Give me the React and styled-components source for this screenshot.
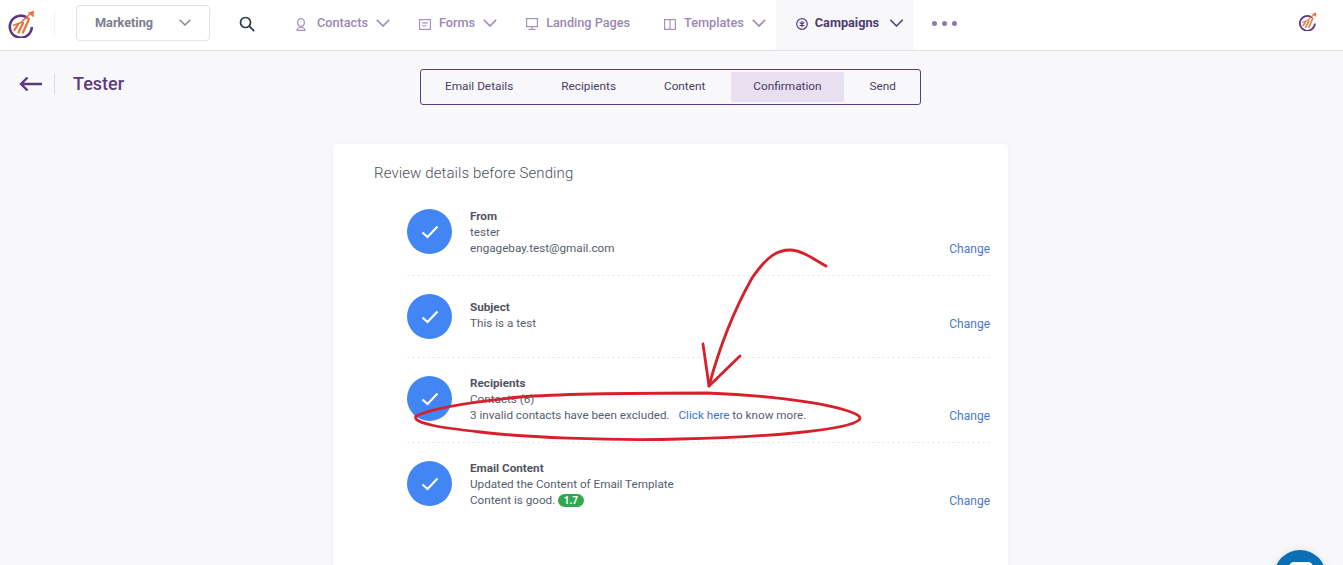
import React from "react";
import styled, { createGlobalStyle } from "styled-components";

const Global = createGlobalStyle`
  html, body { margin: 0; padding: 0; height: 565px; overflow: hidden; background: #f8f8fb; }
  body { font-family: Roboto, "Liberation Sans", sans-serif; color: #565e6e; }
  * { box-sizing: border-box; }
`;

const Page = styled.div`
  position: relative;
  width: 1343px;
  height: 565px;
  overflow: hidden;
`;
const Header = styled.header`
  display: flex;
  align-items: stretch;
  height: 51px;
  background: #fff;
  border-bottom: 1px solid #e3e3e6;
`;
const LogoCell = styled.div`
  display: flex;
  align-items: center;
  width: 55px;
  padding: 0 0 2px 7px;
  position: relative;
  &::after {
    content: "";
    position: absolute;
    right: 0;
    top: 12px;
    height: 22px;
    width: 1px;
    background: #f1f1f3;
  }
`;
const Select = styled.div`
  display: flex;
  align-items: center;
  justify-content: space-between;
  width: 134px;
  height: 36px;
  margin: 5px 0 0 21px;
  padding: 0 18px 1px 18px;
  border: 1px solid #e2e2e6;
  border-radius: 4px;
  font-size: 12.7px;
  font-weight: 700;
  color: #7d7d90;
`;
const SearchCell = styled.div`
  display: flex;
  align-items: center;
  padding: 0 0 2px 29px;
  width: 66px;
`;
const NavItem = styled.div`
  display: flex;
  align-items: center;
  gap: ${p => (p.$active ? 7 : 8)}px;
  padding: 0 ${p => (p.$plain ? 15 : 10)}px 6px ${p => (p.$active ? 20 : 19)}px;
  font-size: 12.7px;
  font-weight: ${p => (p.$active ? 700 : 500)};
  color: ${p => (p.$active ? "#4d3a70" : "#9b87b5")};
  background: ${p => (p.$active ? "#f8f8fb" : "transparent")};
  height: 50px;
  white-space: nowrap;
`;
const NavIcon = styled.span`
  display: flex;
  width: ${p => p.$w || 12}px;
  margin-top: 4px;
`;
const NavChevron = styled.span`
  display: flex;
  margin: 2px 0 0 ${p => p.$offset || 0}px;
`;
const Dots = styled.div`
  display: flex;
  align-items: center;
  gap: 5px;
  padding: 0 0 3px 18px;
`;
const Dot = styled.i`
  width: 5px;
  height: 5px;
  border-radius: 50%;
  background: #8f78ad;
`;
const RightCell = styled.div`
  margin-left: auto;
  display: flex;
  align-items: center;
  padding: 0 26px 8px 0;
`;

const Main = styled.main`
  padding-right: 2px;
`;
const SubHeader = styled.div`
  display: grid;
  grid-template-columns: 1fr auto 1fr;
  padding-top: 18px;
`;
const Crumb = styled.div`
  display: flex;
  align-items: center;
  padding-left: 19px;
  height: 30px;
`;
const Sep = styled.span`
  width: 1px;
  height: 20px;
  margin: 0 18px 0 12px;
  background: #dcdce2;
`;
const PageTitle = styled.h1`
  margin: 0 0 2px;
  font-size: 18px;
  font-weight: 500;
  color: #5c3a7e;
`;
const Tabs = styled.nav`
  display: flex;
  align-items: center;
  justify-content: space-between;
  width: 501px;
  height: 36px;
  padding: 0 2px;
  border: 1px solid #5d3a7e;
  border-radius: 3px;
`;
const Tab = styled.div`
  display: flex;
  align-items: center;
  flex: none;
  height: 30px;
  padding: 0 22px 3px;
  font-size: 11.8px;
  white-space: nowrap;
  color: #4a3a68;
  border-radius: 2px;
  background: ${p => (p.$active ? "#e8dff0" : "transparent")};
`;
const Card = styled.section`
  width: 675px;
  height: 440px;
  margin: 39px auto 0;
  padding: 20px 18px 0 41px;
  background: #fff;
  border-radius: 4px;
  box-shadow: 0 0 6px rgba(60, 60, 90, 0.05);
`;
const CardTitle = styled.h2`
  margin: 0 0 9px;
  font-size: 15px;
  line-height: 18px;
  font-weight: 300;
  color: #4a4f5c;
  letter-spacing: 0.1px;
`;
const List = styled.div`
  margin-left: 33px;
`;
const Row = styled.div`
  display: flex;
  align-items: flex-start;
  gap: 18px;
  padding: 18px 0;
  border-bottom: ${p => (p.$last ? "none" : "1px dashed #ececef")};
`;
const Circle = styled.div`
  flex: none;
  display: flex;
  align-items: center;
  justify-content: center;
  width: 45px;
  height: 45px;
  border-radius: 50%;
  background: #4285f4;
`;
const Body = styled.div`
  flex: 1;
  display: flex;
  align-items: flex-end;
  justify-content: space-between;
  margin: ${p => p.$inset}px 0 1px;
`;
const Lines = styled.div`
  font-size: 11.7px;
  line-height: 16px;
  color: #565e6e;
`;
const Label = styled.div`
  font-weight: 700;
  color: #50535f;
`;
const Link = styled.a`
  color: #3f6fd0;
  margin-left: ${p => (p.$gap ? 6 : 0)}px;
`;
const Change = styled.a`
  font-size: 12px;
  line-height: 16px;
  color: #4a78c9;
  margin-bottom: -1px;
`;
const Score = styled.span`
  display: inline-block;
  padding: 0 5.5px;
  height: 13px;
  line-height: 13px;
  border-radius: 7px;
  background: #2fa84f;
  color: #fff;
  font-size: 10px;
  font-weight: 700;
`;
const Chat = styled.div`
  position: absolute;
  left: 1274px;
  top: 550px;
  width: 52px;
  height: 52px;
  border-radius: 50%;
  background: #0a6fb5;
  box-shadow: 0 0 8px rgba(0, 0, 0, 0.1);
  &::after {
    content: "";
    position: absolute;
    left: 15px;
    top: 12px;
    width: 24px;
    height: 20px;
    border-radius: 5px;
    background: #fff;
  }
`;
const Ink = styled.svg`
  position: absolute;
  inset: 0;
  pointer-events: none;
`;

const Chevron = ({ c = "#9b87b5", w = 14, h = 8, sw = 1.6 }) => (
  <svg width={w} height={h} viewBox="0 0 14 8" fill="none">
    <path d="M.8.8 7 7l6.2-6.2" stroke={c} strokeWidth={sw} />
  </svg>
);
const Logo = ({ s = 28 }) => (
  <svg width={s} height={s} viewBox="0 0 28 28" fill="none">
    <path d="M20.8 8.2A11 11 0 1 0 24.8 17" stroke="#5a3a86" strokeWidth="2.6" />
    <g stroke="#e8743b" strokeWidth="2.2" strokeLinecap="round">
      <path d="M7.5 20 11 14.5" />
      <path d="M11.5 22.5 16 13" />
      <path d="M16 22.5 22 9" />
    </g>
    <path d="M6 15.5 14 12.5 23.5 3.5" stroke="#e8743b" strokeWidth="1.7" />
    <path d="M27 0.8 26.6 7.4 20.8 2.4Z" fill="#e8743b" />
  </svg>
);
const Stroke = ({ children, c = "#a592bd", w = 14, h = 14 }) => (
  <svg width={w} height={h} viewBox={`0 0 ${w} ${h}`} fill="none" stroke={c} strokeWidth="1.2">
    {children}
  </svg>
);
const Check = () => (
  <svg width="18" height="14" viewBox="0 0 18 14" fill="none">
    <path d="M1.5 7.5 6.5 12 16.5 1.5" stroke="#fff" strokeWidth="2.2" />
  </svg>
);

const rows = [
  { label: "From", inset: -1, lines: ["tester", "engagebay.test@gmail.com"] },
  { label: "Subject", inset: 5, lines: ["This is a test"] },
  {
    label: "Recipients",
    inset: -1,
    lines: [
      "Contacts (6)",
      <>3 invalid contacts have been excluded. <Link $gap>Click here</Link> to know more.</>,
    ],
  },
  {
    label: "Email Content",
    inset: -1,
    last: true,
    lines: ["Updated the Content of Email Template", <>Content is good. <Score>1.7</Score></>],
  },
];

export default function App() {
  return (
    <Page>
      <Global />
      <Header>
        <LogoCell><Logo /></LogoCell>
        <Select>
          Marketing
          <Chevron c="#85858f" w={12} h={7} />
        </Select>
        <SearchCell>
          <svg width="16" height="16" viewBox="0 0 16 16" fill="none" stroke="#2d3a4a" strokeWidth="1.7">
            <circle cx="6.5" cy="6.5" r="5" />
            <path d="m10.2 10.2 5 5" />
          </svg>
        </SearchCell>
        <NavItem>
          <NavIcon $w={14}>
            <Stroke w={12} h={13}>
              <ellipse cx="6" cy="4.5" rx="3.4" ry="3.9" />
              <path d="M2 12.4c0-2.2 1.5-2.9 4-2.9s4 .7 4 2.9z" />
            </Stroke>
          </NavIcon>
          Contacts
          <NavChevron><Chevron /></NavChevron>
        </NavItem>
        <NavItem>
          <NavIcon>
            <Stroke w={12} h={11}>
              <rect x=".6" y=".6" width="10.8" height="9.8" />
              <path d="M3.2 3.8h5.6M3.2 6.8h4" />
            </Stroke>
          </NavIcon>
          Forms
          <NavChevron><Chevron /></NavChevron>
        </NavItem>
        <NavItem $plain>
          <NavIcon>
            <Stroke w={12} h={12}>
              <rect x=".6" y=".6" width="10.8" height="8" />
              <path d="M6 8.6v2.4M2.5 11.4h7" />
            </Stroke>
          </NavIcon>
          Landing Pages
        </NavItem>
        <NavItem>
          <NavIcon>
            <Stroke w={12} h={11}>
              <rect x=".6" y=".6" width="10.8" height="9.8" />
              <path d="M6 .6v9.8" />
            </Stroke>
          </NavIcon>
          Templates
          <NavChevron><Chevron /></NavChevron>
        </NavItem>
        <NavItem $active>
          <NavIcon>
            <Stroke c="#5a3a86" w={12} h={12}>
              <circle cx="6" cy="6" r="5.3" />
              <path d="M6 3v6M3.6 4.5l4.8 3M8.4 4.5l-4.8 3" />
            </Stroke>
          </NavIcon>
          Campaigns
          <NavChevron $offset={3}><Chevron c="#5a3a86" w={15} /></NavChevron>
        </NavItem>
        <Dots><Dot /><Dot /><Dot /></Dots>
        <RightCell><Logo s={19} /></RightCell>
      </Header>
      <Main>
        <SubHeader>
          <Crumb>
            <svg width="23" height="16" viewBox="0 0 23 16" fill="none" stroke="#5c3a7e" strokeWidth="2.4">
              <path d="M23 8H2M8.5 1.5 2 8l6.5 6.5" />
            </svg>
            <Sep />
            <PageTitle>Tester</PageTitle>
          </Crumb>
          <Tabs>
            <Tab>Email Details</Tab>
            <Tab>Recipients</Tab>
            <Tab>Content</Tab>
            <Tab $active>Confirmation</Tab>
            <Tab>Send</Tab>
          </Tabs>
        </SubHeader>
        <Card>
          <CardTitle>Review details before Sending</CardTitle>
          <List>
            {rows.map(r => (
              <Row key={r.label} $last={r.last}>
                <Circle><Check /></Circle>
                <Body $inset={r.inset}>
                  <Lines>
                    <Label>{r.label}</Label>
                    {r.lines.map((l, i) => <div key={i}>{l}</div>)}
                  </Lines>
                  <Change>Change</Change>
                </Body>
              </Row>
            ))}
          </List>
        </Card>
      </Main>
      <Chat />
      <Ink width="1343" height="565" viewBox="0 0 1343 565" fill="none" stroke="#d6202c" strokeWidth="2.8" strokeLinecap="round" strokeLinejoin="round">
        <path d="M826 266C812 258 801 250 790 250C778 250 768 255 752 278C733 312 720 345 709 386" />
        <path d="M703 344 709 386 740 356" />
        <path d="M416 416C432 408 470 402 520 397C570 393 650 393 707 393C760 395 815 401 845 410C858 414 862 417 859 420C848 430 770 437 680 439C610 441 520 437 480 432C445 428 412 424 416 416Z" />
      </Ink>
    </Page>
  );
}
